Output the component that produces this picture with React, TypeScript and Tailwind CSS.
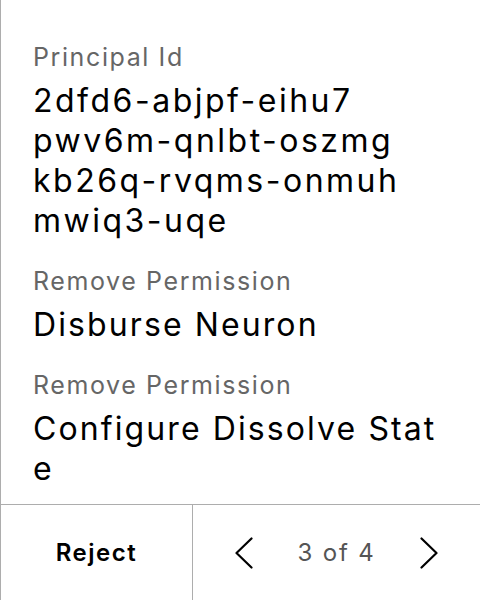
const fields = [
  {
    label: "Principal Id",
    lines: ["2dfd6-abjpf-eihu7", "pwv6m-qnlbt-oszmg", "kb26q-rvqms-onmuh", "mwiq3-uqe"],
    mono: true,
  },
  { label: "Remove Permission", lines: ["Disburse Neuron"] },
  { label: "Remove Permission", lines: ["Configure Dissolve State"] },
];

function Chevron({ dir }: { dir: "left" | "right" }) {
  const pts = dir === "left" ? "16.5,1.5 1.5,16 16.5,30.5" : "1.5,1.5 16.5,16 1.5,30.5";
  return (
    <svg width="18" height="32" viewBox="0 0 18 32" fill="none">
      <polyline points={pts} stroke="#000" strokeWidth="2.2" strokeLinecap="round" strokeLinejoin="round" />
    </svg>
  );
}

export default function App() {
  return (
    <div className="w-[480px] h-[600px] flex flex-col bg-white border-l border-[#adadad] font-['Inter','Liberation_Sans',sans-serif]">
      <div className="flex-1 px-8 pt-[41px]">
        {fields.map((f, i) => (
          <div key={i} className={i > 0 ? "mt-6" : ""}>
            <div className="text-[25px] leading-[32px] tracking-[1.6px] text-[#666]">{f.label}</div>
            <div
              className={
                "mt-2 text-[32px] leading-[40px] text-black break-all " +
                (f.mono ? "tracking-[2.5px]" : "tracking-[2.1px]")
              }
            >
              {f.lines.map((l, j) => (
                <div key={j}>{l}</div>
              ))}
            </div>
          </div>
        ))}
      </div>
      <div className="h-[96px] flex border-t border-[#adadad]">
        <button className="w-[192px] border-r border-[#adadad] flex items-center justify-center text-[24px] font-semibold tracking-[1.5px] text-black">
          Reject
        </button>
        <div className="flex-1 flex items-center justify-between px-[42px]">
          <Chevron dir="left" />
          <span className="text-[24px] tracking-[1.8px] text-[#555]">3 of 4</span>
          <Chevron dir="right" />
        </div>
      </div>
    </div>
  );
}
